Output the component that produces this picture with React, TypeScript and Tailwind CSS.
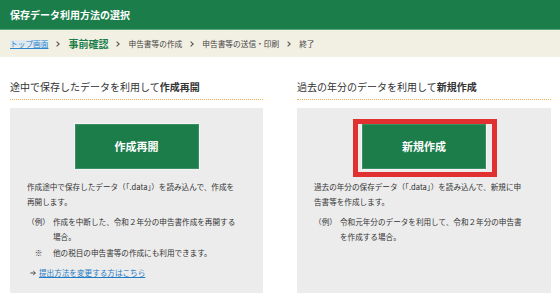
import React from "react";

function Chevron() {
  return (
    <svg width="4" height="6" viewBox="0 0 4 6" className="mx-[8px] shrink-0">
      <polyline points="0.6,0.6 3.2,3 0.6,5.4" fill="none" stroke="#555" strokeWidth="1.1" />
    </svg>
  );
}

function Arrow() {
  return (
    <svg width="6" height="6" viewBox="0 0 6 6" className="shrink-0">
      <line x1="0.3" y1="3" x2="5.4" y2="3" stroke="#444" strokeWidth="0.9" />
      <polyline points="3.2,1 5.4,3 3.2,5" fill="none" stroke="#444" strokeWidth="0.9" />
    </svg>
  );
}

function GreenButton({ label, highlight }: { label: string; highlight?: boolean }) {
  return (
    <div className="flex justify-center">
      <div className="relative w-[124px] h-[45px] bg-[#1c7d4b] border border-[#3a9064] shadow-[0_0_0_1px_#f3f3f3] flex items-center justify-center text-white font-bold text-[11px] leading-none">
        {label}
        {highlight && (
          <div className="absolute left-[-10px] top-[-6px] w-[144px] h-[58px] border-[5px] border-[#e0302f] pointer-events-none" />
        )}
      </div>
    </div>
  );
}

export default function App() {
  return (
    <div className="w-[560px] h-[299px] bg-white overflow-hidden font-['Noto_Sans_CJK_JP','Noto_Sans',sans-serif] text-[#333]">
      <div className="h-[30px] bg-[#1b7e4a] border-b border-[#5ba77d] flex items-center pl-[10px]">
        <span className="text-[10px] font-bold text-white leading-none">保存データ利用方法の選択</span>
      </div>
      <div className="h-[27px] bg-[#f2efe3] flex items-center pl-[10px] text-[7.7px] text-[#444] whitespace-nowrap leading-none">
        <span className="text-[#2a86cf] underline bg-[#dfe9ee]">トップ画面</span>
        <Chevron />
        <span className="text-[10px] font-bold text-[#1b7e4a]">事前確認</span>
        <Chevron />
        <span>申告書等の作成</span>
        <Chevron />
        <span>申告書等の送信・印刷</span>
        <Chevron />
        <span>終了</span>
      </div>
      <div className="grid grid-cols-[253px_254px] gap-x-[34px] pl-[10px] pt-[22px]">
        <div>
          <p className="text-[10px] leading-[15px] pb-[5px] border-b border-dotted border-[#f1ad4f] whitespace-nowrap">
            途中で保存したデータを利用して<span className="font-bold">作成再開</span>
          </p>
          <div className="mt-[8px] h-[185px] bg-[#ececec] pt-[16px] px-[17px]">
            <GreenButton label="作成再開" />
            <div className="mt-[10px] text-[7.6px] leading-[15px] whitespace-nowrap">
              <p>
                作成途中で保存したデータ（「.data」）を読み込んで、作成を
                <br />
                再開します。
              </p>
              <div className="flex mt-[5px]">
                <span className="w-[23px] mr-[3px] text-center shrink-0">（例）</span>
                <p>
                  作成を中断した、令和２年分の申告書作成を再開する
                  <br />
                  場合。
                </p>
              </div>
              <div className="flex mt-[1px]">
                <span className="w-[23px] mr-[3px] text-center shrink-0">※</span>
                <p>他の税目の申告書等の作成にも利用できます。</p>
              </div>
              <div className="flex items-center mt-[5px] pl-[3px]">
                <Arrow />
                <span className="ml-[3px] text-[#1f7bc4] underline">提出方法を変更する方はこちら</span>
              </div>
            </div>
          </div>
        </div>
        <div>
          <p className="text-[10px] leading-[15px] pb-[5px] border-b border-dotted border-[#f1ad4f] whitespace-nowrap">
            過去の年分のデータを利用して<span className="font-bold">新規作成</span>
          </p>
          <div className="mt-[8px] h-[185px] bg-[#ececec] pt-[16px] px-[17px]">
            <GreenButton label="新規作成" highlight />
            <div className="mt-[10px] text-[7.6px] leading-[15px] whitespace-nowrap">
              <p>
                過去の年分の保存データ（「.data」）を読み込んで、新規に申
                <br />
                告書等を作成します。
              </p>
              <div className="flex mt-[5px]">
                <span className="w-[23px] mr-[3px] text-center shrink-0">（例）</span>
                <p>
                  令和元年分のデータを利用して、令和２年分の申告書
                  <br />
                  を作成する場合。
                </p>
              </div>
            </div>
          </div>
        </div>
      </div>
    </div>
  );
}
